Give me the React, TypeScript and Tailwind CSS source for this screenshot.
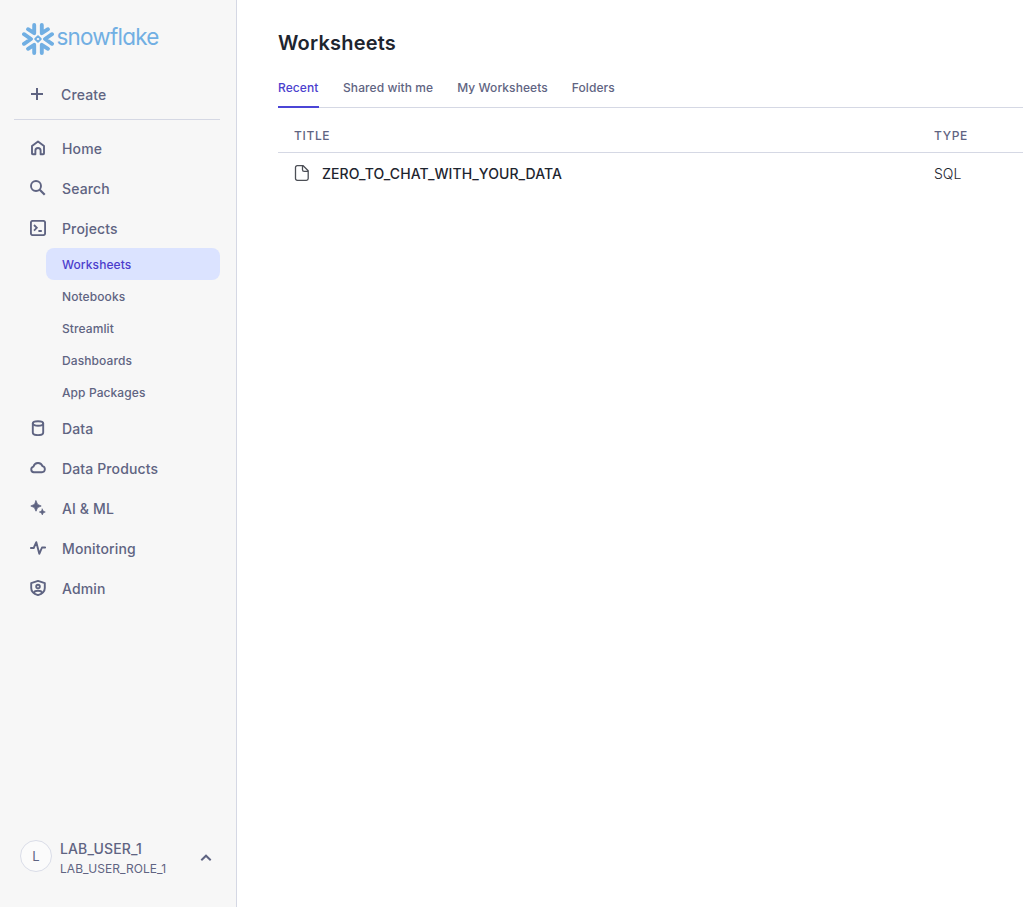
import React from 'react';

type IconProps = { children: React.ReactNode; width?: number };

function Icon({ children, width = 1.9 }: IconProps) {
  return (
    <svg
      className="block size-4 shrink-0"
      viewBox="0 0 16 16"
      fill="none"
      stroke="currentColor"
      strokeWidth={width}
      strokeLinecap="round"
      strokeLinejoin="round"
    >
      {children}
    </svg>
  );
}

const icons = {
  home: (
    <Icon>
      <path d="M2 6 8 1.400l6 4.600v7.500c0 .5-.3.800-.8.800h-2.600V10.600a2.600 2.600 0 0 0-5.200 0v3.700H2.800c-.5 0-.8-.3-.8-.8z" />
    </Icon>
  ),
  search: (
    <Icon>
      <circle cx="6" cy="6" r="5" />
      <path d="m9.700 9.700 5 5" strokeLinecap="butt" strokeWidth="2.200" />
    </Icon>
  ),
  projects: (
    <Icon>
      <rect x=".9" y=".9" width="14.200" height="14.200" rx="1.800" />
      <path d="m4 5 2.800 2.800L4 10.600M8.400 11h3.400" strokeLinecap="butt" strokeLinejoin="miter" strokeWidth="1.800" />
    </Icon>
  ),
  data: (
    <Icon>
      <ellipse cx="8" cy="3.500" rx="5.200" ry="2.300" />
      <path d="M2.800 3.500v9c0 1.500 2 2.600 5.200 2.600s5.200-1.100 5.200-2.600v-9" />
    </Icon>
  ),
  cloud: (
    <Icon>
      <path d="M3.800 12.300a2.900 2.900 0 0 1-.3-5.700 4.700 4.700 0 0 1 9-.4 3.100 3.100 0 0 1-.6 6.100z" />
    </Icon>
  ),
  sparkle: (
    <Icon width={0}>
      <path d="M6 .8 7.600 4.400 11.200 6 7.600 7.600 6 11.200 4.400 7.600.8 6l3.600-1.600z" fill="currentColor" strokeWidth=".8" />
      <path d="m12.300 9 .9 2.100 2.100.9-2.100.9-.9 2.100-.9-2.100-2.100-.9 2.100-.9z" fill="currentColor" strokeWidth=".6" />
    </Icon>
  ),
  pulse: (
    <Icon>
      <path d="M.8 8h2.900l2.600-5.800L9.300 13.800 12 7.500h3.200" />
    </Icon>
  ),
  admin: (
    <Icon>
      <path d="m8 .9 6.800 2.200v4.800c0 3.500-2.900 5.900-6.800 7.200-3.900-1.300-6.800-3.700-6.800-7.200V3.100z" />
      <circle cx="8" cy="6.600" r="1.800" />
      <path d="M4 12.600c.5-1.200 2-1.800 4-1.800s3.500.6 4 1.800" />
    </Icon>
  ),
};

function Logo() {
  return (
    <div className="flex h-8 items-center text-[#71afe3]">
      <svg className="block size-8 shrink-0" viewBox="0 0 32 32" fill="none" stroke="currentColor" strokeWidth="3.900" strokeLinecap="round" strokeLinejoin="round">
        <path d="M2 11.200 9 16l-7 4.800M30 11.200 23 16l7 4.800" />
        <path d="M12.200 2v8.200L6 6.200M19.800 2v8.200L26 6.200M12.200 30v-8.200L6 25.800M19.800 30v-8.200l6.200 4" />
        <path d="m16 13.200 2.800 2.800-2.800 2.800-2.800-2.800z" strokeWidth="1.900" />
      </svg>
      <svg className="ml-px block h-8 w-[112px]" viewBox="0 0 112 32" fill="currentColor">
        <text
          x="1.500"
          y="22.200"
          textLength="102"
          lengthAdjust="spacingAndGlyphs"
          className="font-['Inter',sans-serif] text-[23.5px] font-normal tracking-[-0.8px] [font-feature-settings:'cv11']"
        >
          snowflake
        </text>
      </svg>
    </div>
  );
}

function NavItem({ icon, label }: { icon: React.ReactNode; label: string }) {
  return (
    <a className="flex h-10 items-center gap-4 pl-[30px]">
      {icon}
      <span className="pt-0.5 text-sm font-medium leading-5 tracking-[0.13px]">{label}</span>
    </a>
  );
}

const projectPages = ['Worksheets', 'Notebooks', 'Streamlit', 'Dashboards', 'App Packages'];

function Sidebar() {
  return (
    <aside className="flex h-full w-[237px] shrink-0 flex-col border-r border-[#d5d8e4] bg-[#f7f7f7] text-[#5f6482]">
      <div className="pl-[22px] pt-[23px]">
        <Logo />
      </div>
      <div className="ml-3.5 mr-4 mt-5 flex h-[45px] items-center gap-4 border-b border-[#d5d8e4] pb-1 pl-[15px]">
        <span className="pb-0.5">
          <Icon width={2}>
            <path d="M8 2v12M2 8h12" strokeLinecap="butt" />
          </Icon>
        </span>
        <span className="text-sm font-medium leading-5 tracking-[0.15px]">Create</span>
      </div>
      <nav className="mt-2 flex flex-col">
        <NavItem icon={icons.home} label="Home" />
        <NavItem icon={icons.search} label="Search" />
        <NavItem icon={icons.projects} label="Projects" />
        {projectPages.map((page, i) => (
          <a
            key={page}
            className={`ml-[46px] mr-4 flex h-8 items-center rounded-lg px-4 pt-0.5 text-xs font-medium tracking-[0.09px] ${
              i === 0 ? 'bg-[#dbe3ff] text-[#4c3dcc]' : ''
            }`}
          >
            {page}
          </a>
        ))}
        <NavItem icon={icons.data} label="Data" />
        <NavItem icon={icons.cloud} label="Data Products" />
        <NavItem icon={icons.sparkle} label="AI & ML" />
        <NavItem icon={icons.pulse} label="Monitoring" />
        <NavItem icon={icons.admin} label="Admin" />
      </nav>
      <div className="mb-7 mt-auto flex items-center pl-5 pr-[22px]">
        <div className="mb-1.5 flex size-8 items-center justify-center rounded-full border border-[#dadde8] bg-[#fbfbfb] pt-px text-[13px]">
          L
        </div>
        <div className="ml-2 flex flex-col">
          <span className="text-sm font-medium leading-5 tracking-[0.13px]">LAB_USER_1</span>
          <span className="text-xs leading-5 tracking-[0.06px]">LAB_USER_ROLE_1</span>
        </div>
        <div className="ml-auto pb-0.5">
          <Icon width={2}>
            <path d="m3.300 10.200 4.700-4.500 4.700 4.500" strokeLinecap="butt" strokeLinejoin="miter" />
          </Icon>
        </div>
      </div>
    </aside>
  );
}

function Main() {
  return (
    <main className="flex min-w-0 flex-1 flex-col bg-white pl-[41px] pt-7 text-[#1e252f]">
      <h1 className="text-xl font-semibold leading-[30px] tracking-[0.2px]">Worksheets</h1>
      <div className="mt-2.5 flex h-10 gap-6 border-b border-[#d5d8e4] text-xs font-medium tracking-[0.08px] text-[#5f6482]">
        <span className="-mb-px w-[41px] border-b-2 border-[#4b45d6] pt-3 leading-4 text-[#4b3fce]">Recent</span>
        <span className="pt-3 leading-4">Shared with me</span>
        <span className="pt-3 leading-4">My Worksheets</span>
        <span className="pt-3 leading-4">Folders</span>
      </div>
      <div className="flex h-[45px] items-center border-b border-[#d5d8e4] pl-4 pt-3 text-xs font-medium tracking-[0.65px] text-[#5f6482]">
        <span className="w-[640px]">TITLE</span>
        <span>TYPE</span>
      </div>
      <div className="flex h-10 items-center pl-4 pt-0.5 text-sm">
        <div className="flex w-[640px] items-center gap-3">
          <span className="pb-0.5 text-[#4c4f56]">
            <Icon width={1.3}>
              <path d="M3.300.7h5.900l5 5v7.800c0 1.100-.7 1.800-1.800 1.800H3.300c-1.100 0-1.800-.7-1.800-1.800v-11C1.500 1.400 2.200.7 3.300.7zM8.500.9v3.800c0 1 .6 1.600 1.600 1.600H14" />
            </Icon>
          </span>
          <span className="font-medium tracking-[0.08px]">ZERO_TO_CHAT_WITH_YOUR_DATA</span>
        </div>
        <span className="font-light">SQL</span>
      </div>
    </main>
  );
}

export default function App() {
  return (
    <div className="flex h-screen overflow-hidden font-['Inter',sans-serif]">
      <Sidebar />
      <Main />
    </div>
  );
}
